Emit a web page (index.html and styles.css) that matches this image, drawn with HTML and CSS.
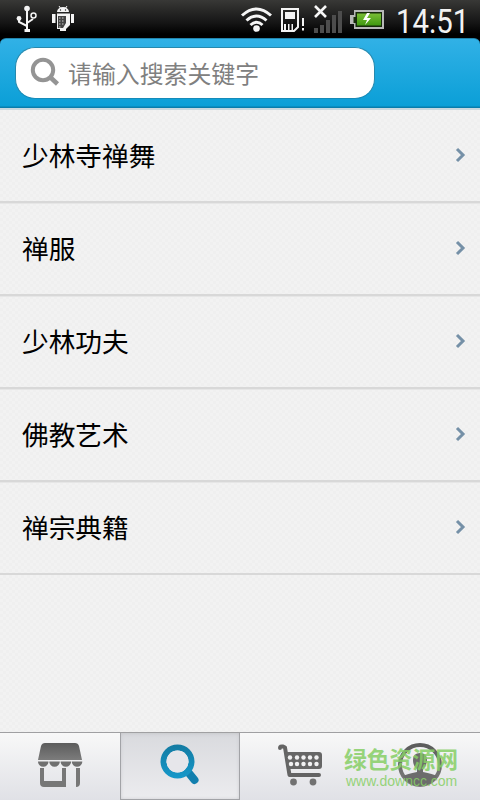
FILE: index.html
```html
<!DOCTYPE html>
<html lang="zh-CN">
<head>
<meta charset="utf-8">
<title>搜索</title>
<link rel="stylesheet" href="styles.css">
</head>
<body>
<div class="screen">
  <div class="status">
    <svg class="status-left" viewBox="0 0 120 38" width="120" height="38">
      <g fill="none" stroke="#f4f4f4" stroke-width="2">
        <path d="M27 9V30M27 26L19 22V19M27 23L33 19"/>
        <circle cx="33.500" cy="15.500" r="2.500" stroke-width="1.500"/>
      </g>
      <g fill="#f4f4f4">
        <circle cx="27" cy="8.500" r="2.800"/><circle cx="19" cy="18.500" r="2.400"/><rect x="24.500" y="29" width="5.500" height="3"/>
        <path d="M57 12a6 5 0 0 1 12 0zM57 13.500h13V25l-4 4v2H60V29h-3zM52 14h3.500v9H52zM71 14h3v9h-3z"/>
      </g>
      <path d="M59 6l2 3M67 6l-2 3" stroke="#f4f4f4"/>
      <circle cx="60.500" cy="10" r=".7" fill="#222"/><circle cx="65.500" cy="10" r=".7" fill="#222"/>
      <path d="M58 16h8v7l-3 5h-5z" fill="#444"/>
      <path d="M59 18h6M59 21h6M59 24h5M59 27h3" stroke="#ccc" stroke-dasharray="1.500 1.500"/>
    </svg>
    <svg class="status-right" viewBox="235 0 160 38" width="160" height="38">
      <g fill="none" stroke="#f6f6f6" stroke-width="3">
        <path d="M242 15.500Q256.500 2.500 271 15.500M246.500 20.500Q256.500 11.500 266.500 20.500M250.500 25Q256.500 19.500 262.500 25"/>
      </g>
      <circle cx="256.500" cy="28.500" r="3.300" fill="#f6f6f6"/>
      <path d="M282 9h16v18l-4 4h-12z" fill="none" stroke="#f4f4f4" stroke-width="2"/>
      <path d="M285 12h10v7h-10zM284 24h2v6h-2zM288 24h1.500v6H288zM291.500 24h1.500v6h-1.500zM302 18h2v8h-2zM302 28h2v2.500h-2z" fill="#f4f4f4"/>
      <path d="M315 6L326 17M326 6L315 17" stroke="#f6f6f6" stroke-width="2.600"/>
      <path d="M314 28h4v5h-4zM320 25h4v8h-4zM326 20h4v13h-4zM332 15h4v18h-4zM338 11h4v22h-4z" fill="#4d4d4d"/>
      <path d="M354 10h30v19h-30v-5h-4v-9h4z" fill="#b8b8b8"/>
      <path d="M355.500 12h26.500v15h-26.500v-4h-2v-6h2z" fill="#172b0b"/>
      <path d="M357 13.500h24v12h-24z" fill="url(#battery)"/>
      <path d="M367 13l-4 7h4l-2 5 6-7h-4l3-5z" fill="#fff"/>
      <defs><linearGradient id="battery" x1="0" y1="0" x2="0" y2="1"><stop stop-color="#79bd35"/><stop offset="1" stop-color="#3f9810"/></linearGradient></defs>
    </svg>
    <span class="clock">14:51</span>
  </div>
  <header class="header">
    <div class="search">
      <svg viewBox="0 0 32 32" width="32" height="32" fill="none" stroke="#949494"><circle cx="13" cy="13" r="10.200" stroke-width="4"/><path d="M20 20l7.500 7" stroke-width="4.500"/></svg>
      <span>请输入搜索关键字</span>
    </div>
  </header>
  <main class="list">
    <div class="row"><span>少林寺禅舞</span><svg class="arrow" viewBox="0 0 12 16"><path d="M2 2l6 6-6 6"/></svg></div>
    <div class="row"><span>禅服</span><svg class="arrow" viewBox="0 0 12 16"><path d="M2 2l6 6-6 6"/></svg></div>
    <div class="row"><span>少林功夫</span><svg class="arrow" viewBox="0 0 12 16"><path d="M2 2l6 6-6 6"/></svg></div>
    <div class="row"><span>佛教艺术</span><svg class="arrow" viewBox="0 0 12 16"><path d="M2 2l6 6-6 6"/></svg></div>
    <div class="row"><span>禅宗典籍</span><svg class="arrow" viewBox="0 0 12 16"><path d="M2 2l6 6-6 6"/></svg></div>
  </main>
  <nav class="tabs">
    <div class="tab">
      <svg viewBox="0 733 120 67" width="120" height="67">
        <defs><linearGradient id="gray" x1="0" y1="0" x2="0" y2="1"><stop stop-color="#5c5c5c"/><stop offset="1" stop-color="#7c7c7c"/></linearGradient></defs>
        <path d="M45 743h30q3 0 4 3l3 14H38l3-14q1-3 4-3z" fill="url(#gray)"/>
        <path d="M38 761.500h10.500a5.200 5.200 0 0 1-10.500 0zM49.300 761.500h10.500a5.200 5.200 0 0 1-10.500 0zM60.600 761.500h10.500a5.200 5.200 0 0 1-10.500 0zM71.800 761.500h10.500a5.200 5.200 0 0 1-10.500 0z" fill="#707070"/>
        <path d="M40 768h4v13h18v-13h4v19H44q-4 0-4-4zM76 768h4v15q0 4-4 4z" fill="#777"/>
      </svg>
    </div>
    <div class="tab active">
      <svg viewBox="120 733 120 67" width="120" height="67">
        <defs><linearGradient id="blue" x1="0" y1="0" x2="0" y2="1"><stop stop-color="#147ba2"/><stop offset="1" stop-color="#1598ca"/></linearGradient></defs>
        <path d="M188 772l6.500 8" stroke="#127fae" stroke-width="8" stroke-linecap="round"/>
        <path fill-rule="evenodd" d="M160.500 761.500a17 17 0 1 0 34 0a17 17 0 1 0-34 0zM166.500 761.500a11 11 0 1 1 22 0a11 11 0 1 1-22 0z" fill="url(#blue)"/>
        <circle cx="177.500" cy="761.500" r="11" fill="#e6e6ea"/>
      </svg>
    </div>
    <div class="tab">
      <svg viewBox="240 733 120 67" width="120" height="67">
        <path d="M280 748q0-2 3-1.500l2 1L289.500 775H319" fill="none" stroke="#646464" stroke-width="4" stroke-linejoin="round" stroke-linecap="round"/>
        <path d="M285 752h34q3 0 3 3v11q0 3-3 3h-31z" fill="#666"/>
        <g fill="#f1f1f2"><circle cx="290" cy="757.500" r="2.200"/><circle cx="297" cy="757.500" r="2.200"/><circle cx="303.500" cy="757.500" r="2.200"/><circle cx="310" cy="757.500" r="2.200"/><circle cx="316.500" cy="757.500" r="2.200"/><circle cx="291" cy="764" r="2.200"/><circle cx="297" cy="764" r="2.200"/><circle cx="303.500" cy="764" r="2.200"/><circle cx="310" cy="764" r="2.200"/><circle cx="316.500" cy="764" r="2.200"/></g>
        <circle cx="293.500" cy="782" r="3.400" fill="#727272"/><circle cx="313" cy="782" r="3.400" fill="#727272"/>
      </svg>
    </div>
    <div class="tab">
      <svg viewBox="360 733 120 67" width="120" height="67">
        <circle cx="420" cy="765" r="20" fill="none" stroke="url(#gray)" stroke-width="4"/>
        <path d="M413 760q0-7 7-7t7 7q0 6-4 9v3q10 2 14 4Q431 786 420 786T403 776q4-2 14-4v-3q-4-3-4-9z" fill="#6c6c6c"/>
      </svg>
    </div>
    <div class="watermark"><b>绿色资源网</b><span>www.downcc.com</span></div>
  </nav>
</div>
</body>
</html>
```
FILE: styles.css
```css
* { box-sizing: border-box; }
body { margin: 0; background: #000; font-family: "Liberation Sans", "Noto Sans CJK SC", sans-serif; }
svg { display: block; flex: none; }
.screen { width: 480px; height: 800px; display: flex; flex-direction: column; overflow: hidden; }
.status { height: 38px; flex: none; display: flex; background: linear-gradient(#383836, #151515 60%, #000 90%); }
.status-right { margin-left: 115px; }
.clock { margin-left: 1px; font: 33px/44px Roboto, sans-serif; color: #f2f2f2; white-space: nowrap; transform: scaleX(.89); transform-origin: left; }
.header { height: 72px; flex: none; padding: 8px 15px; border-top: 1px solid #2385ad; border-bottom: 2px solid #c9d8df; border-radius: 6px 6px 0 0; background: linear-gradient(#31b1e6, #0b9fd7 67px, #087dac 68px); }
.search { width: 360px; height: 52px; padding-left: 14px; display: flex; align-items: center; background: #fff; border: 1px solid #2689ae; border-bottom-color: #168bb9; border-radius: 20px; color: #808080; font-size: 23.900px; font-family: "Noto Sans CJK SC", sans-serif; }
.search span { margin-left: 6px; line-height: 48px; }
.list { flex: 1; min-height: 0; background: repeating-conic-gradient(#f2f2f2 0 25%, #efefef 0 50%) 0 0 / 6px 6px; }
.row { height: 93px; padding: 0 13px 0 22px; display: flex; align-items: center; justify-content: space-between; border-bottom: 2px solid #d8d8d8; box-shadow: 0 1px #e6e6e6; color: #000; font: 26.700px/40px "Noto Sans CJK SC", sans-serif; }
.row span { padding-bottom: 2px; }
.row:last-child { box-shadow: none; }
.arrow { width: 12px; height: 16px; margin-bottom: 1px; fill: none; stroke: #7590a7; stroke-width: 3; }
.tabs { position: relative; height: 68px; flex: none; display: grid; grid-template-columns: repeat(4, 120px); border-top: 1px solid #a0a0a2; background: linear-gradient(#f8f8f8, #e0e1e6); }
.active { background: linear-gradient(#d9dade, #ececef); box-shadow: inset 1px 0 #a2a3a7, inset -1px 0 #a2a3a7, inset 0 -1px #a2a3a7, inset 0 0 4px #bfc0c4; }
.watermark { position: absolute; left: 344px; top: 12px; display: flex; flex-direction: column; color: #87cf66; opacity: .85; white-space: nowrap; }
.watermark b { font: 700 22.800px/28px "Noto Sans CJK SC", sans-serif; }
.watermark span { margin-left: 2px; font: 14px/17px "Liberation Sans", sans-serif; }
```
